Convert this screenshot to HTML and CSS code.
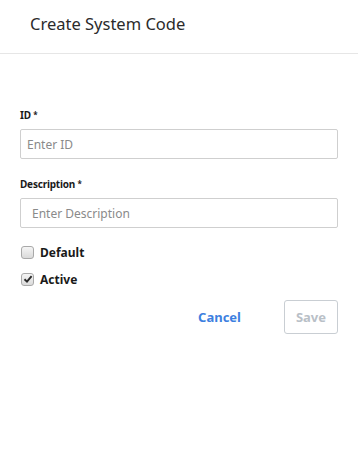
FILE: index.html
```html
<!DOCTYPE html>
<html>
<head>
    <meta charset="UTF-8">
    <title>Create System Code</title>
    <link rel="stylesheet" href="styles.css">
</head>
<body>

    <div class="dialog">
        <div class="dialog_head">
            <h1>Create System Code</h1>
        </div>

        <div class="dialog_body">
            <div class="field">
                <label for="code_id">ID <span class="req">*</span></label>
                <input id="code_id" class="id_input" type="text" placeholder="Enter ID">
            </div>
            <div class="field">
                <label for="code_desc">Description <span class="req">*</span></label>
                <input id="code_desc" class="desc_input" type="text" placeholder="Enter Description">
            </div>

            <div class="checks">
                <label class="check"><span class="box"></span> Default</label>
                <label class="check"><span class="box">
                    <svg width="10" height="10" viewBox="0 0 10 10"><path d="M1.5 5.2 L4 7.6 L8.6 2.2" fill="none" stroke="#2a2a2a" stroke-width="1.9"/></svg>
                </span> Active</label>
            </div>

            <div class="actions">
                <button class="cancel_bt">Cancel</button>
                <button class="save_bt" disabled>Save</button>
            </div>
        </div>
    </div>

</body>
</html>
```

FILE: styles.css
```css
*{
    margin: 0;
    padding: 0;
    box-sizing: border-box;
}
body{
    background: #fff;
    font-family: "Noto Sans", "Open Sans", sans-serif;
    color: #222;
}
.dialog{
    width: 358px;
    height: 460px;
    background: #fff;
}
.dialog_head{
    height: 54px;
    padding: 12px 30px 0;
    border-bottom: 1px solid #e6e6e6;
}
.dialog_head h1{
    font-size: 16.5px;
    font-weight: normal;
    color: #2b2b2b;
    line-height: 24px;
}
.dialog_body{
    padding: 54px 20px 0;
}
.field{
    margin-bottom: 18px;
}
.field label{
    display: block;
    font-size: 10px;
    font-weight: bold;
    letter-spacing: -0.2px;
    color: #1a1a1a;
    line-height: 14px;
    margin-bottom: 7px;
}
.req{
    font-size: 8px;
    vertical-align: top;
}
.field input{
    display: block;
    width: 318px;
    height: 30px;
    border: 1px solid #cfcfcf;
    border-radius: 2px;
    padding: 0 10px 0 6px;
    font-family: inherit;
    font-size: 12px;
    color: #333;
    outline: none;
}
.field .desc_input{
    padding-left: 11px;
}
.field input::placeholder{
    color: #8a8a8a;
}
.checks{
    display: flex;
    flex-direction: column;
    gap: 9px;
    margin-top: -3px;
}
.check{
    display: flex;
    align-items: center;
    gap: 6px;
    height: 18px;
    font-size: 12px;
    font-weight: bold;
    color: #1a1a1a;
}
.box{
    display: flex;
    align-items: center;
    justify-content: center;
    width: 13px;
    height: 13px;
    margin-left: 1px;
    border: 1px solid #a9a9a9;
    border-radius: 3px;
    background: linear-gradient(#f5f5f5, #dadada);
}
.actions{
    display: flex;
    justify-content: flex-end;
    align-items: center;
    gap: 43px;
    margin-top: 12px;
}
.cancel_bt{
    border: none;
    background: none;
    font-family: inherit;
    font-size: 13px;
    font-weight: bold;
    color: #3d7fe0;
}
.save_bt{
    width: 54px;
    height: 34px;
    border: 1px solid #c9ced3;
    border-radius: 3px;
    background: #fff;
    font-family: inherit;
    font-size: 13px;
    font-weight: bold;
    color: #b9c0c7;
}
```
